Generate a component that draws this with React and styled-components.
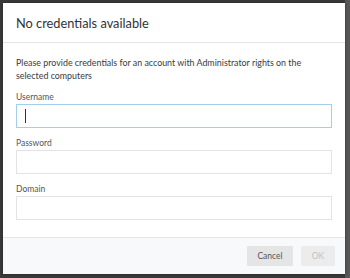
import React from "react";
import styled, { createGlobalStyle } from "styled-components";

const Global = createGlobalStyle`
  html, body { margin: 0; padding: 0; }
  body {
    background: #363636;
    font-family: Lato, "Open Sans", "Liberation Sans", sans-serif;
    width: 350px;
    height: 278px;
    overflow: hidden;
  }
`;

const Backdrop = styled.div`
  width: 350px;
  height: 278px;
  box-sizing: border-box;
  padding: 3px 5px 4px 3px;
  background: linear-gradient(to right, #3a3a3a 0, #3a3a3a 345px, #575757 345px);
`;

const Modal = styled.div`
  width: 342px;
  height: 271px;
  background: #fff;
  display: flex;
  flex-direction: column;
  box-shadow: 0 0 3px rgba(0, 0, 0, 0.4);
`;

const Header = styled.div`
  height: 39px;
  border-bottom: 1px solid #e5e5e5;
  display: flex;
  align-items: center;
  padding: 0 13px;
`;

const Title = styled.h1`
  margin: 0;
  font-size: 12.8px;
  font-weight: 400;
  color: #333;
  padding-top: 1px;
`;

const Body = styled.div`
  flex: 1;
  padding: 13px 13px 0 13px;
  display: flex;
  flex-direction: column;
`;

const Intro = styled.p`
  margin: 0 0 8px 0;
  font-size: 8.9px;
  line-height: 13px;
  color: #3a3a3a;
`;

const Group = styled.div`
  display: flex;
  flex-direction: column;
  margin-bottom: ${(p) => (p.$last ? 0 : 8)}px;
`;

const Label = styled.label`
  font-size: 8.5px;
  line-height: 14px;
  color: #555;
`;

const Field = styled.div`
  position: relative;
`;

const Input = styled.input`
  display: block;
  box-sizing: border-box;
  width: 316px;
  height: 24px;
  border: 1px solid ${(p) => (p.$focused ? "#a3cfec" : "#e3e3e3")};
  background: #fff;
  outline: none;
  padding: 0 8px;
  font-family: inherit;
  font-size: 9px;
  caret-color: transparent;
`;

const Caret = styled.span`
  position: absolute;
  left: 9px;
  top: 5px;
  width: 1px;
  height: 14px;
  background: #333;
`;

const Footer = styled.div`
  height: 36px;
  border-top: 1px solid #e6e6e6;
  background: #f8f9fa;
  display: flex;
  justify-content: flex-end;
  align-items: center;
  gap: 8px;
  padding: 0 10px 0 0;
`;

const Button = styled.button`
  height: 20px;
  min-width: ${(p) => p.$w}px;
  border: none;
  border-radius: 1px;
  background: ${(p) => (p.$disabled ? "#ececec" : "#e5e5e5")};
  color: ${(p) => (p.$disabled ? "#c2c2c2" : "#555")};
  font-family: inherit;
  font-size: 8.5px;
  padding: 0;
  cursor: default;
`;

export default function App() {
  return (
    <>
      <Global />
      <Backdrop>
        <Modal>
          <Header>
            <Title>No credentials available</Title>
          </Header>
          <Body>
            <Intro>
              Please provide credentials for an account with Administrator rights on the
              selected computers
            </Intro>
            <Group>
              <Label>Username</Label>
              <Field>
                <Input $focused />
                <Caret />
              </Field>
            </Group>
            <Group>
              <Label>Password</Label>
              <Field>
                <Input type="password" />
              </Field>
            </Group>
            <Group $last>
              <Label>Domain</Label>
              <Field>
                <Input />
              </Field>
            </Group>
          </Body>
          <Footer>
            <Button $w={46}>Cancel</Button>
            <Button $w={34} $disabled>OK</Button>
          </Footer>
        </Modal>
      </Backdrop>
    </>
  );
}
